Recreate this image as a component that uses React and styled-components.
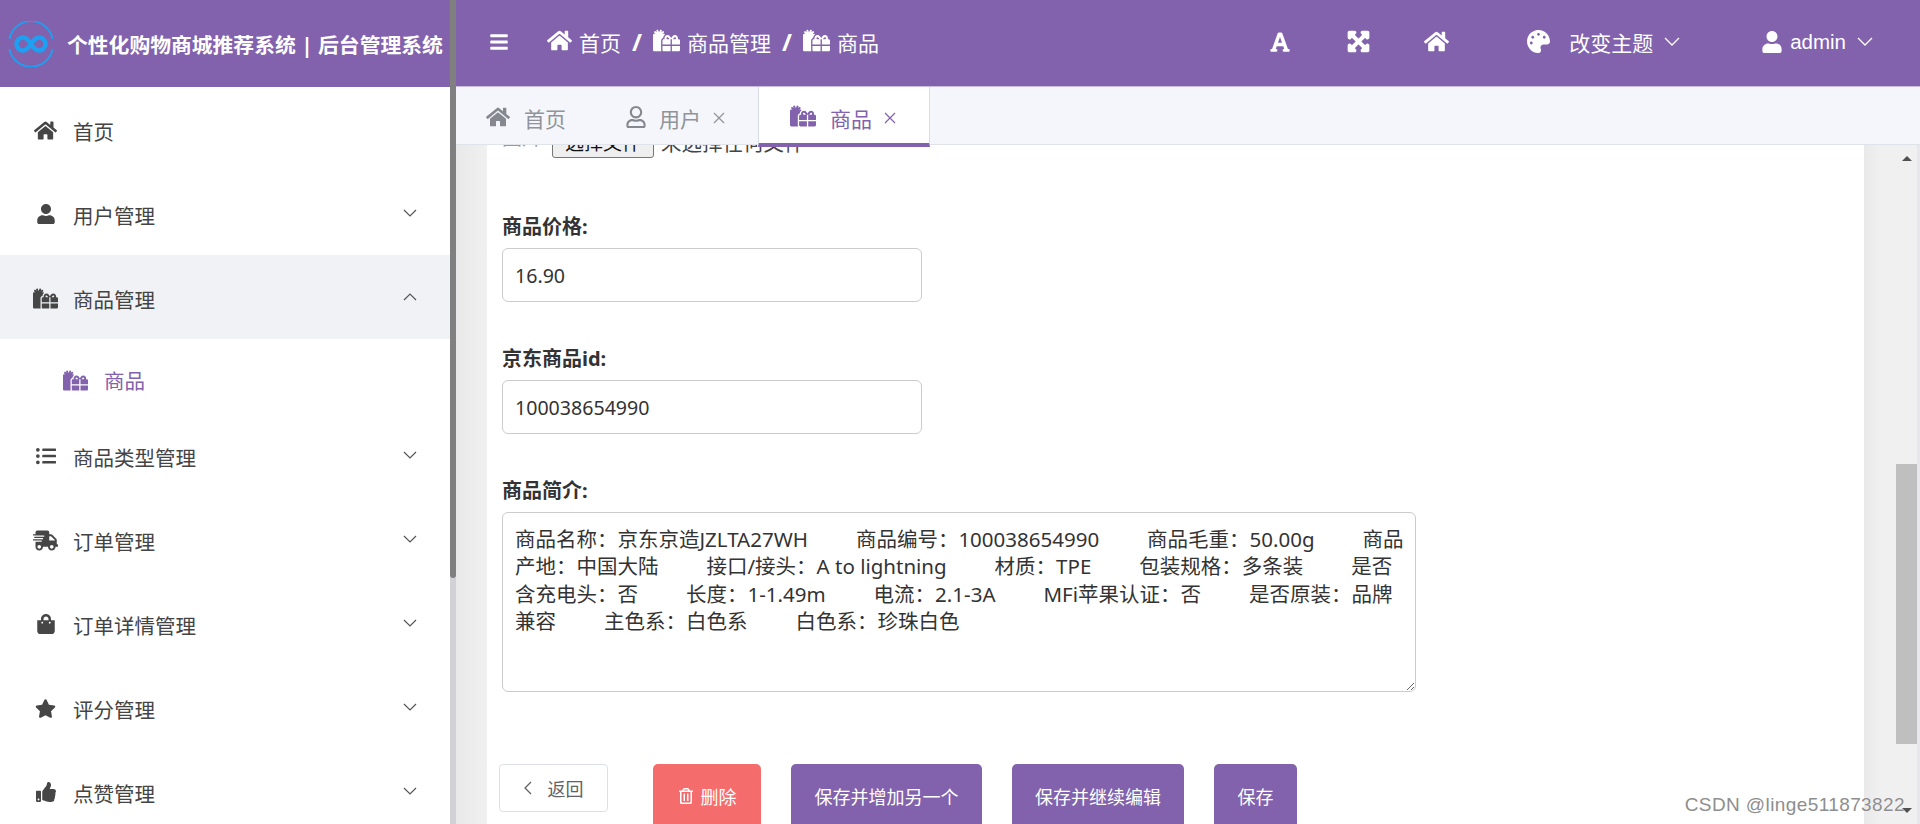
import React from "react";
import styled, { createGlobalStyle } from "styled-components";
import {
  FaBars,
  FaExpandArrowsAlt,
  FaFont,
  FaGifts,
  FaHome,
  FaListUl,
  FaPalette,
  FaRegTrashAlt,
  FaRegUser,
  FaShippingFast,
  FaShoppingBag,
  FaStar,
  FaThumbsUp,
  FaUser,
} from "react-icons/fa";

const purple = "#8262ad";

const GlobalStyle = createGlobalStyle`
  html, body {
    margin: 0;
    height: 100%;
    overflow: hidden;
    background: #fff;
    font-family: "Noto Sans", "Noto Sans CJK SC", sans-serif;
  }
  * { box-sizing: border-box; }
`;

const Page = styled.div`
  position: relative;
  display: flex;
  width: 1920px;
  height: 824px;
  overflow: hidden;
`;

const Sidebar = styled.aside`
  display: flex;
  width: 456px;
  flex: none;
`;

const SideColumn = styled.div`
  width: 450px;
  overflow: hidden;
  background: #fff;
`;

const SideRail = styled.div`
  width: 6px;
  background: #d2d2d6;
`;

const SideThumb = styled.div`
  height: 578px;
  background: #808080;
  border-radius: 0 0 3px 3px;
`;

const Brand = styled.div`
  display: flex;
  align-items: center;
  height: 87px;
  padding-left: 8px;
  gap: 13px;
  background: ${purple};
`;

const BrandName = styled.div`
  color: #fff;
  font-size: 20.8px;
  font-weight: 700;
  white-space: nowrap;
`;

const MenuRow = styled.div`
  display: flex;
  align-items: center;
  height: 84px;
  padding: 0 33px 0 33px;
  color: #444;
  font-size: 20.5px;
  background: ${({ $open }) => ($open ? "#f1f2f6" : "#fff")};
`;

const SubRow = styled(MenuRow)`
  height: 74px;
  padding: 8px 0 0 63px;
  color: ${purple};
`;

const MenuIcon = styled.span`
  display: flex;
  justify-content: center;
  width: 25px;
  margin-right: 15px;
  font-size: ${({ $size }) => $size || 21}px;
  color: #464646;
  margin-top: 2px;
`;

const SubIcon = styled.span`
  display: flex;
  margin-right: 16px;
  font-size: 25px;
`;

const MenuText = styled.span`
  flex: 1;
  padding-top: 4px;
`;

const MenuChevron = styled.svg`
  width: 14px;
  height: 8px;
  fill: none;
  stroke: #555;
  stroke-width: 1.2;
`;

const Main = styled.main`
  display: flex;
  flex: 1;
  flex-direction: column;
  min-width: 0;
`;

const TopBar = styled.header`
  display: flex;
  align-items: center;
  height: 87px;
  padding: 0 47px 3px 33px;
  color: #fff;
  font-size: 21px;
  background: ${purple};
  border-bottom: 1px solid #c7bde0;
`;

const MenuToggle = styled.span`
  display: flex;
  margin-right: 38px;
  font-size: 20px;
`;

const Crumbs = styled.nav`
  display: flex;
  align-items: center;
`;

const Crumb = styled.span`
  display: flex;
  align-items: center;
  gap: 7px;
  font-size: 21px;
  white-space: nowrap;
`;

const CrumbIcon = styled.span`
  display: flex;
  font-size: ${({ $size }) => $size}px;
  margin-top: -2px;
`;

const Slash = styled.span`
  margin: 0 11px;
  font-size: 24px;
  font-weight: 700;
  line-height: 1;
`;

const Tools = styled.div`
  display: flex;
  align-items: center;
  margin-left: auto;
`;

const ToolSlot = styled.span`
  display: flex;
  justify-content: center;
  width: 78px;
  font-size: ${({ $size }) => $size}px;
`;

const ThemeMenu = styled.div`
  display: flex;
  align-items: center;
  margin-left: 52px;
`;

const UserMenu = styled.div`
  display: flex;
  align-items: center;
  margin-left: 81px;
`;

const ToolLabel = styled.span`
  margin: 0 11px 0 ${({ $gap }) => $gap}px;
  white-space: nowrap;
`;

const AdminLabel = styled(ToolLabel)`
  font-family: "Liberation Sans", sans-serif;
  font-size: 20.5px;
`;

const HeadChevron = styled.svg`
  width: 16px;
  height: 9px;
  fill: none;
  stroke: #fff;
  stroke-width: 1.3;
`;

const TabBar = styled.div`
  position: relative;
  z-index: 2;
  display: flex;
  height: 58px;
  flex: none;
  background: #f4f6fb;
  border-bottom: 1px solid #e1e3eb;
`;

const Tab = styled.div`
  display: flex;
  align-items: center;
  height: ${({ $active }) => ($active ? 60 : 57)}px;
  padding: 5px ${({ $plain }) => ($plain ? 28 : 33)}px 0 ${({ $plain }) => ($plain ? 30 : 31)}px;
  color: ${({ $active }) => ($active ? purple : "#909399")};
  font-size: 21px;
  background: ${({ $active }) => ($active ? "#fff" : "transparent")};
  border-bottom: ${({ $active }) => ($active ? `4px solid ${purple}` : "0")};
  border-left: ${({ $active }) => ($active ? "1px solid #d8dce5" : "0")};
  border-right: ${({ $active }) => ($active ? "1px solid #d8dce5" : "0")};
`;

const TabIcon = styled.span`
  display: flex;
  margin-right: ${({ $gap }) => $gap || 14}px;
  font-size: ${({ $size }) => $size || 21}px;
  color: ${({ $active }) => ($active ? purple : "#85888f")};
  margin-top: -3px;
`;

const TabClose = styled.svg`
  width: 12px;
  height: 12px;
  margin-left: 12px;
  fill: none;
  stroke: currentColor;
  stroke-width: 1.2;
`;

const ScrollArea = styled.div`
  display: flex;
  flex: 1;
  min-height: 0;
`;

const GutterLeft = styled.div`
  width: 31px;
  flex: none;
  background: linear-gradient(90deg, #e9e9e9, #f0f0f0);
`;

const Card = styled.section`
  flex: 1;
  min-width: 0;
  overflow: hidden;
  background: #fff;
`;

const Form = styled.form`
  display: flex;
  flex-direction: column;
  margin-top: -19px;
  padding-left: 15px;
`;

const FileRow = styled.div`
  display: flex;
  align-items: center;
  height: 32px;
  margin-bottom: 14px;
  font-size: 20.5px;
  color: #444;
`;

const FileHint = styled.span`
  width: 50px;
  margin-bottom: 12px;
  font-size: 20px;
  color: #9a9a9a;
`;

const FileButton = styled.span`
  display: flex;
  align-items: center;
  justify-content: center;
  width: 102px;
  height: 32px;
  margin-right: 7px;
  color: #111;
  font-size: 19px;
  background: #efefef;
  border: 1px solid #767676;
  border-radius: 3px;
`;

const Field = styled.div`
  display: flex;
  flex-direction: column;
  margin-top: ${({ $top }) => $top}px;
`;

const Label = styled.label`
  margin-bottom: 7px;
  color: #333;
  font-size: 20px;
  font-weight: 700;
  line-height: 28px;
`;

const TextInput = styled.input`
  width: 420px;
  height: 54px;
  padding: 0 12px;
  color: #333;
  font: inherit;
  font-size: 19.6px;
  background: #fff;
  border: 1px solid #ccc;
  border-radius: 6px;
  outline: none;
`;

const TextArea = styled.textarea`
  display: block;
  width: 914px;
  height: 180px;
  padding: 13px 12px 0;
  overflow: hidden;
  color: #333;
  font: inherit;
  font-size: 20.5px;
  line-height: 27.4px;
  white-space: pre;
  background: #fff;
  border: 1px solid #ccc;
  border-radius: 6px;
  outline: none;
`;

const Actions = styled.div`
  display: flex;
  align-items: flex-start;
  margin: 72px 0 0 -3px;
`;

const BackButton = styled.button`
  display: flex;
  align-items: center;
  justify-content: center;
  width: 109px;
  height: 48px;
  margin-right: 45px;
  color: #606266;
  font: inherit;
  font-size: 18px;
  background: #fff;
  border: 1px solid #dcdfe6;
  border-radius: 4px;
`;

const BackChevron = styled.svg`
  width: 8px;
  height: 14px;
  margin-right: 16px;
  fill: none;
  stroke: #606266;
  stroke-width: 1.3;
`;

const ActionButton = styled.button`
  display: flex;
  align-items: center;
  justify-content: center;
  gap: 7px;
  width: ${({ $width }) => $width}px;
  height: 64px;
  margin-right: 30px;
  flex: none;
  color: #fff;
  font: inherit;
  font-size: 18px;
  background: ${({ $danger }) => ($danger ? "#f56c6c" : purple)};
  border: 0;
  border-radius: 5px;
`;

const GutterRight = styled.div`
  display: flex;
  flex: none;
  width: 56px;
  padding-left: 32px;
  background: linear-gradient(90deg, #e9e9e9, #f0f0f0 30%);
  border-right: 3px solid #e7e7ec;
`;

const ScrollRail = styled.div`
  display: flex;
  flex-direction: column;
  align-items: center;
  width: 21px;
  padding: 11px 0;
`;

const ArrowUp = styled.span`
  width: 0;
  height: 0;
  border: solid transparent;
  border-width: 0 5.5px 5px;
  border-bottom-color: #505050;
`;

const ArrowDown = styled(ArrowUp)`
  margin-top: auto;
  border-width: 5px 5.5px 0;
  border-top-color: #505050;
`;

const ScrollThumb = styled.div`
  width: 21px;
  height: 280px;
  margin-top: 303px;
  background: #bfbfbf;
`;

const Watermark = styled.div`
  position: absolute;
  right: 15px;
  bottom: 8px;
  color: #8e8e8e;
  font-family: "Liberation Sans", sans-serif;
  font-size: 19px;
  letter-spacing: 0.4px;
  text-shadow: 0 0 1px #fff;
  pointer-events: none;
`;

const description = [
  "商品名称：京东京造JZLTA27WH         商品编号：100038654990         商品毛重：50.00g         商品",
  "产地：中国大陆         接口/接头：A to lightning         材质：TPE         包装规格：多条装         是否",
  "含充电头：否         长度：1-1.49m         电流：2.1-3A         MFi苹果认证：否         是否原装：品牌",
  "兼容         主色系：白色系         白色系：珍珠白色",
].join("\n");

const menu = [
  { label: "商品类型管理", icon: <FaListUl />, size: 20 },
  { label: "订单管理", icon: <FaShippingFast />, size: 25 },
  { label: "订单详情管理", icon: <FaShoppingBag />, size: 20 },
  { label: "评分管理", icon: <FaStar />, size: 21 },
  { label: "点赞管理", icon: <FaThumbsUp />, size: 20 },
];

const Chevron = ({ up }) => (
  <MenuChevron viewBox="0 0 14 8">
    <polyline points={up ? "1,7 7,1 13,7" : "1,1 7,7 13,1"} />
  </MenuChevron>
);

const HeaderChevron = () => (
  <HeadChevron viewBox="0 0 16 9">
    <polyline points="1,1 8,8 15,1" />
  </HeadChevron>
);

const CloseIcon = () => (
  <TabClose viewBox="0 0 12 12">
    <path d="M1 1l10 10M11 1L1 11" />
  </TabClose>
);

const Logo = () => (
  <svg width="46" height="46" viewBox="0 0 46 46" fill="none">
    <g stroke="#1d9ff2" strokeWidth="1.8">
      <path d="M1.4 18A22 22 0 0 1 44.6 18" />
      <path d="M1.4 28A22 22 0 0 0 44.6 28" />
    </g>
    <path
      d="M23 23C19 17 17 16.5 15 16.5A6.5 6.5 0 0 0 15 29.5C17 29.5 19 29 23 23C27 17 29 16.5 31 16.5A6.5 6.5 0 0 1 31 29.5C29 29.5 27 29 23 23Z"
      stroke="#1d9ff2"
      strokeWidth="4.4"
    />
  </svg>
);

const App = () => (
  <Page>
    <GlobalStyle />
    <Sidebar>
      <SideColumn>
        <Brand>
          <Logo />
          <BrandName>个性化购物商城推荐系统 | 后台管理系统</BrandName>
        </Brand>
        <MenuRow>
          <MenuIcon $size={23}><FaHome /></MenuIcon>
          <MenuText>首页</MenuText>
        </MenuRow>
        <MenuRow>
          <MenuIcon $size={20}><FaUser /></MenuIcon>
          <MenuText>用户管理</MenuText>
          <Chevron />
        </MenuRow>
        <MenuRow $open>
          <MenuIcon $size={25}><FaGifts /></MenuIcon>
          <MenuText>商品管理</MenuText>
          <Chevron up />
        </MenuRow>
        <SubRow>
          <SubIcon><FaGifts /></SubIcon>
          <span>商品</span>
        </SubRow>
        {menu.map((item) => (
          <MenuRow key={item.label}>
            <MenuIcon $size={item.size}>{item.icon}</MenuIcon>
            <MenuText>{item.label}</MenuText>
            <Chevron />
          </MenuRow>
        ))}
      </SideColumn>
      <SideRail>
        <SideThumb />
      </SideRail>
    </Sidebar>

    <Main>
      <TopBar>
        <MenuToggle><FaBars /></MenuToggle>
        <Crumbs>
          <Crumb><CrumbIcon $size={25}><FaHome /></CrumbIcon>首页</Crumb>
          <Slash>/</Slash>
          <Crumb><CrumbIcon $size={27}><FaGifts /></CrumbIcon>商品管理</Crumb>
          <Slash>/</Slash>
          <Crumb><CrumbIcon $size={27}><FaGifts /></CrumbIcon>商品</Crumb>
        </Crumbs>
        <Tools>
          <ToolSlot $size={22}><FaFont /></ToolSlot>
          <ToolSlot $size={23}><FaExpandArrowsAlt stroke="#fff" strokeWidth={36} /></ToolSlot>
          <ToolSlot $size={25}><FaHome /></ToolSlot>
          <ThemeMenu>
            <FaPalette size={23} />
            <ToolLabel $gap={19}>改变主题</ToolLabel>
            <HeaderChevron />
          </ThemeMenu>
          <UserMenu>
            <FaUser size={22} />
            <AdminLabel $gap={7}>admin</AdminLabel>
            <HeaderChevron />
          </UserMenu>
        </Tools>
      </TopBar>

      <TabBar>
        <Tab $plain>
          <TabIcon $size={24}><FaHome /></TabIcon>
          首页
        </Tab>
        <Tab>
          <TabIcon $size={22} $gap={12}><FaRegUser /></TabIcon>
          用户
          <CloseIcon />
        </Tab>
        <Tab $active>
          <TabIcon $active $size={26}><FaGifts /></TabIcon>
          商品
          <CloseIcon />
        </Tab>
      </TabBar>

      <ScrollArea>
        <GutterLeft />
        <Card>
          <Form>
            <FileRow>
              <FileHint>图片</FileHint>
              <FileButton>选择文件</FileButton>
              未选择任何文件
            </FileRow>
            <Field $top={41}>
              <Label>商品价格:</Label>
              <TextInput readOnly defaultValue="16.90" />
            </Field>
            <Field $top={43}>
              <Label>京东商品id:</Label>
              <TextInput readOnly defaultValue="100038654990" />
            </Field>
            <Field $top={43}>
              <Label>商品简介:</Label>
              <TextArea readOnly defaultValue={description} />
            </Field>
            <Actions>
              <BackButton type="button">
                <BackChevron viewBox="0 0 8 14">
                  <polyline points="7,1 1,7 7,13" />
                </BackChevron>
                返回
              </BackButton>
              <ActionButton type="button" $danger $width={108}>
                <FaRegTrashAlt size={16} />
                删除
              </ActionButton>
              <ActionButton type="button" $width={191}>保存并增加另一个</ActionButton>
              <ActionButton type="button" $width={172}>保存并继续编辑</ActionButton>
              <ActionButton type="button" $width={83}>保存</ActionButton>
            </Actions>
          </Form>
        </Card>
        <GutterRight>
          <ScrollRail>
            <ArrowUp />
            <ScrollThumb />
            <ArrowDown />
          </ScrollRail>
        </GutterRight>
      </ScrollArea>
    </Main>
    <Watermark>CSDN @linge511873822</Watermark>
  </Page>
);

export default App;
